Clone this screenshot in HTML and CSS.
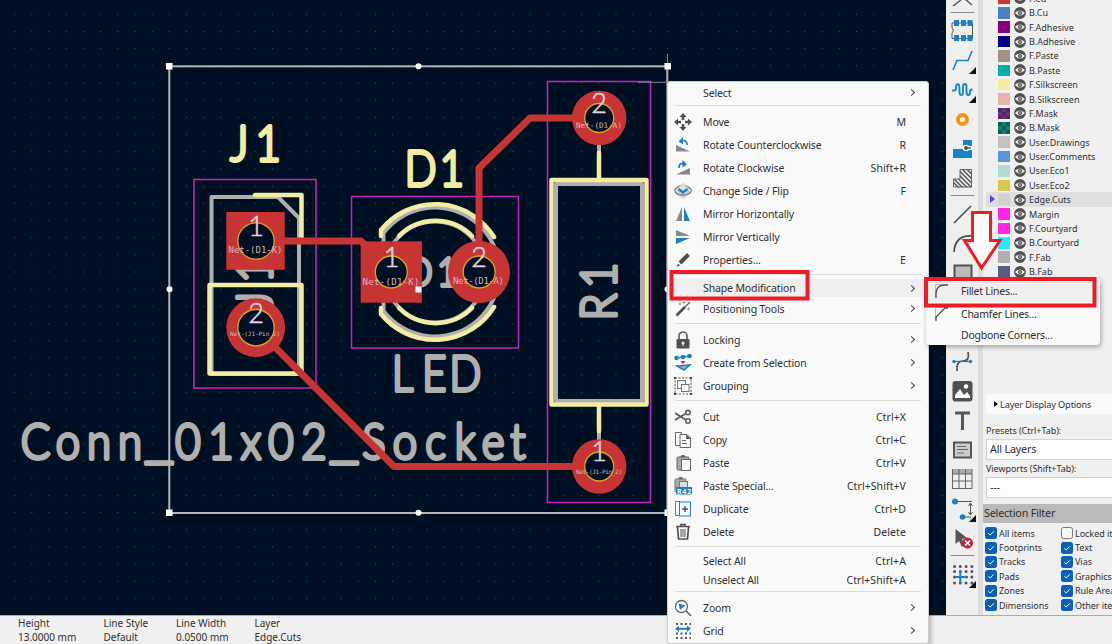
FILE: index.html
```html
<!DOCTYPE html>
<html lang="en">
<head>
<meta charset="utf-8">
<title>PCB Editor</title>
<link rel="stylesheet" href="styles.css">
</head>
<body>
<div class="app">
  <div class="workspace">
    <svg class="canvas" width="946" height="615" viewBox="0 0 946 615">
      <defs>
        <pattern id="dots" x="14.2" y="13.8" width="17.18" height="17.18" patternUnits="userSpaceOnUse"><rect width="1" height="1" fill="#46525c"/></pattern>
      </defs>
      <rect width="946" height="615" fill="#001023"/>
      <rect width="946" height="615" fill="url(#dots)"/>
      <g class="fab">
        <path d="M211.5 374V197H278L299 218V374Z"/>
        <path d="M383.5 311V233A64.500 64.500 0 1 1 383.5 311"/>
        <circle cx="435" cy="272" r="50.500"/>
        <rect x="556" y="184" width="86" height="217"/>
        <path d="M599 145V155M599 430V441"/>
      </g>
      <g class="glyph grey">
        <text class="big" transform="scale(.9 1)" y="459.500 459.500 459.500 459.500 452.500 459.500 459.500 459.500 459.500 459.500 452.500 459.500 459.500 459.500 459.500 459.500 459.500" x="39.4 75.500 110 144.500 176.700 208.900 245.500 279 312.200 348.900 382.200 415.500 450 484 516.700 547.800 575.500">Conn<tspan class="bar">_</tspan>01x02<tspan class="bar">_</tspan>Socket</text>
        <text class="big" transform="scale(.86 1)" x="468 505 541" y="391.5">LED</text>
        <text class="mid" transform="scale(.9 1)" x="466 497" y="286">D1</text>
        <text class="big" transform="translate(615.5 0) rotate(-90) scale(.9 1)" x="-341 -306" y="0">R1</text>
        <text class="big" transform="translate(271.5 0) rotate(-90) scale(.9 1)" x="-334.500 -300" y="0">J1</text>
      </g>
      <g class="silk">
        <path d="M255 195H301.5V240M209.5 285H301.5V373.5H209.5Z"/>
        <path d="M381 236V230A69.400 69.400 0 0 1 494 237M381 308V314A69.400 69.400 0 0 0 494 307"/>
        <path d="M399 236A51.5 51.5 0 0 1 472 236M399 308A51.5 51.5 0 0 0 472 308"/>
        <rect x="551.5" y="180" width="95" height="224.5"/>
        <path d="M599 153V180M599 405V431"/>
      </g>
      <g class="glyph yellow">
        <text class="big" transform="scale(.9 1)" x="266 298" y="161.5">J1</text>
        <text class="big" transform="scale(.86 1)" x="489 525.500" y="186.5">D1</text>
      </g>
      <g class="court">
        <rect x="194" y="179.5" width="122" height="208.5"/>
        <rect x="351.5" y="196.5" width="167" height="151.5"/>
        <rect x="547.5" y="81.5" width="103" height="421"/>
      </g>
      <g class="track">
        <path d="M256 241H361L391 272M479 272V168L530 118H599M256 328L394 466.5H599"/>
      </g>
      <g fill="#c83434">
        <rect x="226.3" y="212" width="58.4" height="57.8"/><circle cx="255.7" cy="327.7" r="29.4"/>
        <rect x="360.7" y="241.4" width="61.2" height="61.3"/><circle cx="479" cy="272" r="31"/>
        <circle cx="599.2" cy="118" r="27.2"/><circle cx="599.2" cy="466.5" r="27.2"/>
      </g>
      <g class="hole">
        <circle cx="256" cy="241" r="18.2"/><circle cx="256" cy="327.7" r="18.2"/>
        <circle cx="391.3" cy="272" r="16"/><circle cx="479.2" cy="272" r="16"/>
        <circle cx="599.2" cy="118" r="14.5"/><circle cx="599.2" cy="466.5" r="14.5"/>
      </g>
      <g class="padno">
        <text x="256" y="236">1</text><text x="256" y="323">2</text>
        <text x="391.5" y="266.5">1</text><text x="479" y="266.5">2</text>
        <text x="599" y="112.5">2</text><text x="599" y="461">1</text>
      </g>
      <g class="net">
        <text x="228.5" y="253" textLength="54">Net-(D1-K)</text>
        <text x="362.5" y="285" textLength="57">Net-(D1-K)</text>
        <text x="453" y="284" textLength="51">Net-(D1-A)</text>
        <text class="net-s" x="576" y="128" textLength="46">Net-(D1-A)</text>
        <text class="net-xs" x="230" y="336" textLength="50">Net-(J1-Pin_2)</text>
        <text class="net-xs" x="576" y="474" textLength="46">Net-(J1-Pin_2)</text>
      </g>
      <g class="edge">
        <rect x="169.3" y="66.3" width="498" height="446.7"/>
        <path class="cursor" d="M667.5 54V66M638 82.3H668"/>
      </g>
      <g fill="#fff">
        <path d="M166 63h6.5v6.500h-6.500zM664.500 63h6.500v6.500h-6.500zM166 509.500h6.500v6.500h-6.500zM664.500 509.500h6.500v6.500h-6.500zM415.500 286.500h6v6h-6z"/>
        <circle cx="418.500" cy="66.300" r="3"/><circle cx="418.500" cy="512.700" r="3"/><circle cx="169.500" cy="289.300" r="3"/><circle cx="667.500" cy="289.300" r="3"/>
      </g>
    </svg>

    <svg class="toolbar" width="32" height="615" viewBox="946 0 32 615">
      <g fill="none" stroke="#575757" stroke-width="1.500">
        <path d="M953 6L961 0M972 5L965-1"/>
        <path d="M950.500 12.500H974M950.500 195.500H974M950.500 555.500H974" stroke="#8c8c8c" stroke-width="1"/>
        <path d="M952 23V28q3 2 0 5V38.500H972.500V23Z" stroke-width="1"/>
      </g>
      <path fill="#1a81c4" d="M954 20h5v6h-5zM961 20h5v6h-5zM967.500 20h5v6h-5zM954 35h5v6h-5zM961 35h5v6h-5zM967.500 35h5v6h-5z"/>
      <path fill="none" stroke="#1a81c4" stroke-width="1.600" d="M953 70L957 60.500H968L972 51"/>
      <path fill="none" stroke="#1a81c4" stroke-width="1.900" d="M952 90.500h2.500q1.500 0 1.500-2.500c0-5 3.500-5 3.500 0v4c0 4 3.500 4 3.500 0v-5c0-4 3.500-4 3.500 0v5c0 4 3.500 4 3.500 0q0-2.500 2.500-2.500"/>
      <path fill="#111" d="M976 67V74H969ZM976 96V103H969ZM976 515V522H969ZM976 581V588H969Z"/>
      <circle cx="962.500" cy="119.500" r="4.500" fill="#fff" stroke="#f6930a" stroke-width="4"/>
      <path fill="#1a81c4" d="M963 140H972V158H953V149H963Z"/><path d="M966 148H972" stroke="#fff" stroke-width="4"/><circle cx="966" cy="148" r="3.300" fill="#fff"/><path d="M966 148H971" stroke="#555" stroke-width="1.500"/><circle cx="966" cy="148" r="2" fill="#555"/>
      <clipPath id="zone"><path d="M960 169H972V187.500H953V179H960Z"/></clipPath>
      <g clip-path="url(#zone)"><path stroke="#555" stroke-width="1.500" d="M944 169l20 20M948.500 169l20 20M953 169l20 20M957.500 169l20 20M962 169l20 20M966.500 169l20 20M940 169l20 20"/></g>
      <path fill="none" stroke="#666" d="M960 169.500H971.500V187H953.500V179H960Z"/>
      <g fill="none" stroke="#505050" stroke-width="1.700"><path d="M954 223L971 206M954 252Q955 235 972 236"/><rect x="954.500" y="265.500" width="17" height="17" fill="#bbb" stroke-width="2"/>
      <path d="M957 371Q956 361 963 361T968 352"/></g>
      <path d="M953 361.500H971" stroke="#1a81c4" stroke-width="1.200"/><circle cx="954" cy="361.500" r="1.700" fill="#1a81c4"/><circle cx="970.500" cy="361.500" r="1.700" fill="#1a81c4"/>
      <rect x="952.500" y="381" width="20" height="20.500" rx="3" fill="#505050"/><circle cx="966" cy="386.500" r="2.300" fill="#fff"/><path d="M955 398V395L960 389L964 395L967 392L970 396V398Z" fill="#fff"/>
      <path d="M955 413H970M962.500 413V430" stroke="#575757" stroke-width="3"/>
      <rect x="954" y="442.500" width="17" height="15" fill="#ccc" stroke="#555" stroke-width="2"/><path d="M957 446.500H966M957 449.500H968M957 453H964" stroke="#666"/>
      <rect x="952" y="469" width="20" height="5" fill="#aaa"/><path d="M952.500 469V489M959 469V489M965.500 469V489M972 469V489M952 474H972M952 481H972M952 488.500H972" stroke="#666"/>
      <g fill="#1a81c4"><circle cx="955" cy="501.500" r="3"/><circle cx="962.500" cy="517" r="2.800"/></g>
      <path d="M957 501.500H972M963 517H971M970.500 503V515M968.500 506L970.500 503L972.500 506M968.500 512L970.500 515L972.500 512" fill="none" stroke="#555"/>
      <path d="M955.500 529V544L959 541L962 547L965 545L962 539L967 538Z" fill="#555"/><circle cx="967.500" cy="543" r="5.500" fill="#c51f45"/><path d="M965 540.500L970 545.500M970 540.500L965 545.500" stroke="#fff" stroke-width="1.700"/>
      <path d="M954.500 566.500H973M954.500 571.500H973M954.500 577H973M954.500 583H973" stroke="#555" stroke-width="3" stroke-linecap="round" stroke-dasharray="0 5.800"/>
      <path d="M955.500 577H968M960.300 571V583" stroke="#1a81c4" stroke-width="2"/>
    </svg>

    <div class="panel">
      <svg width="0" height="0" class="defs"><defs><symbol id="eye" viewBox="0 0 12 12"><circle cx="6" cy="6" r="5.900" fill="#505050"/><path d="M1 6Q6 .8 11 6Q6 11.200 1 6Z" fill="#ececec"/><circle cx="6" cy="6" r="2.100" fill="#505050"/><circle cx="6" cy="6" r=".8" fill="#ddd"/></symbol>
      <symbol id="chk" viewBox="0 0 12 12"><rect width="12" height="12" rx="2.500" fill="#0860b8"/><path d="M3.300 6.200L5.200 8L8.800 4.300" fill="none" stroke="#fff" stroke-width="1"/></symbol></defs></svg>
      <div class="layers">
        <div class="layer"><i class="c-fcu"></i><svg><use href="#eye"/></svg><span>F.Cu</span></div>
        <div class="layer"><i class="c-bcu"></i><svg><use href="#eye"/></svg><span>B.Cu</span></div>
        <div class="layer"><i class="c-fad"></i><svg><use href="#eye"/></svg><span>F.Adhesive</span></div>
        <div class="layer"><i class="c-bad"></i><svg><use href="#eye"/></svg><span>B.Adhesive</span></div>
        <div class="layer"><i class="c-fpa"></i><svg><use href="#eye"/></svg><span>F.Paste</span></div>
        <div class="layer"><i class="c-bpa"></i><svg><use href="#eye"/></svg><span>B.Paste</span></div>
        <div class="layer"><i class="c-fsi"></i><svg><use href="#eye"/></svg><span>F.Silkscreen</span></div>
        <div class="layer"><i class="c-bsi"></i><svg><use href="#eye"/></svg><span>B.Silkscreen</span></div>
        <div class="layer"><i class="c-fma"></i><svg><use href="#eye"/></svg><span>F.Mask</span></div>
        <div class="layer"><i class="c-bma"></i><svg><use href="#eye"/></svg><span>B.Mask</span></div>
        <div class="layer"><i class="c-udr"></i><svg><use href="#eye"/></svg><span>User.Drawings</span></div>
        <div class="layer"><i class="c-uco"></i><svg><use href="#eye"/></svg><span>User.Comments</span></div>
        <div class="layer"><i class="c-ue1"></i><svg><use href="#eye"/></svg><span>User.Eco1</span></div>
        <div class="layer"><i class="c-ue2"></i><svg><use href="#eye"/></svg><span>User.Eco2</span></div>
        <div class="layer active"><i class="c-edg"></i><svg><use href="#eye"/></svg><span>Edge.Cuts</span></div>
        <div class="layer"><i class="c-mar"></i><svg><use href="#eye"/></svg><span>Margin</span></div>
        <div class="layer"><i class="c-mar"></i><svg><use href="#eye"/></svg><span>F.Courtyard</span></div>
        <div class="layer"><i class="c-bco"></i><svg><use href="#eye"/></svg><span>B.Courtyard</span></div>
        <div class="layer"><i class="c-ffa"></i><svg><use href="#eye"/></svg><span>F.Fab</span></div>
        <div class="layer"><i class="c-bfa"></i><svg><use href="#eye"/></svg><span>B.Fab</span></div>
      </div>
      <div class="display-options"><b></b><span>Layer Display Options</span></div>
      <div class="label first">Presets (Ctrl+Tab):</div>
      <div class="combo">All Layers</div>
      <div class="label second">Viewports (Shift+Tab):</div>
      <div class="combo">---</div>
      <div class="filter-head">Selection Filter</div>
      <div class="filters">
        <label><svg><use href="#chk"/></svg>All items</label><label><em></em>Locked items</label>
        <label><svg><use href="#chk"/></svg>Footprints</label><label><svg><use href="#chk"/></svg>Text</label>
        <label><svg><use href="#chk"/></svg>Tracks</label><label><svg><use href="#chk"/></svg>Vias</label>
        <label><svg><use href="#chk"/></svg>Pads</label><label><svg><use href="#chk"/></svg>Graphics</label>
        <label><svg><use href="#chk"/></svg>Zones</label><label><svg><use href="#chk"/></svg>Rule Areas</label>
        <label><svg><use href="#chk"/></svg>Dimensions</label><label><svg><use href="#chk"/></svg>Other items</label>
      </div>
    </div>
  </div>
  <div class="status">
    <div>Height<br>13.0000 mm</div><div>Line Style<br>Default</div><div>Line Width<br>0.0500 mm</div><div>Layer<br>Edge.Cuts</div>
  </div>
</div>

<div class="menu">
  <div class="item short"><span>Select</span><u></u></div>
  <hr>
  <div class="item"><svg viewBox="0 0 18 18"><path fill="#505050" d="M9 0l3.500 4H10.300v3H7.700V4H5.500zM9 18l3.500-4H10.300v-3H7.700v3H5.500zM0 9l4-3.500v2.200h3v2.600H4v2.200zM18 9l-4-3.500v2.200h-3v2.600h3v2.200z"/></svg><span>Move</span><kbd>M</kbd></div>
  <div class="item"><svg viewBox="0 0 18 18"><path fill="#888" d="M2 9L16 15.500H2Z"/><path d="M7 5Q13 3 13 9" fill="none" stroke="#1a81c4" stroke-width="1.700"/><path fill="#1a81c4" d="M4.500 5.500L9 1V8.500Z"/></svg><span>Rotate Counterclockwise</span><kbd>R</kbd></div>
  <div class="item"><svg viewBox="0 0 18 18"><path fill="#888" d="M16 9L2 15.500H16Z"/><path d="M10 5Q5 3 5 9" fill="none" stroke="#1a81c4" stroke-width="1.700"/><path fill="#1a81c4" d="M13 5.500L8.500 1V8.500Z"/></svg><span>Rotate Clockwise</span><kbd>Shift+R</kbd></div>
  <div class="item"><svg viewBox="0 0 18 18"><path fill="#d2d2d2" d="M9 1L16 6V12L9 17L2 12V6Z"/><ellipse cx="9" cy="8.500" rx="8.300" ry="4.700" fill="none" stroke="#777" stroke-width="1.200"/><path fill="#ddd" d="M9 1L14 6L9 10L4 6Z"/><path d="M4.500 7L9 10.500L13.500 7" fill="none" stroke="#1a81c4" stroke-width="2.500"/></svg><span>Change Side / Flip</span><kbd>F</kbd></div>
  <div class="item"><svg viewBox="0 0 18 18"><path fill="#888" d="M8 2V16H2Z"/><path fill="#1a81c4" d="M10 2V16H16Z"/></svg><span>Mirror Horizontally</span></div>
  <div class="item"><svg viewBox="0 0 18 18"><path fill="#888" d="M2 2L16 8H2Z"/><path fill="#1a81c4" d="M2 10H16L2 16Z"/></svg><span>Mirror Vertically</span></div>
  <div class="item"><svg viewBox="0 0 18 18"><path d="M6 12L14.500 3.500" stroke="#505050" stroke-width="4"/><path fill="#505050" d="M4 12.500l2 2l-3.500 1.500z"/></svg><span>Properties...</span><kbd>E</kbd></div>
  <hr>
  <div class="item short hover"><span>Shape Modification</span><u></u></div>
  <div class="item"><svg viewBox="0 0 18 18"><path d="M2.500 15.500L11 7" stroke="#505050" stroke-width="2.600"/><path d="M11 7L16 2" stroke="#666" stroke-width="1.500"/><path d="M6 2.500v3M4.500 4h3M10 1v3M8.500 2.500h3M14.500 7.500v3M13 9h3" stroke="#888" stroke-width=".8"/></svg><span>Positioning Tools</span><u></u></div>
  <hr>
  <div class="item"><svg viewBox="0 0 18 18"><rect x="2.500" y="8" width="13" height="9.500" rx="1" fill="#505050"/><path d="M5 8V5a4 4 0 0 1 8 0V8" fill="none" stroke="#606060" stroke-width="1.700"/><path d="M9 10.500v4.500M7.500 12h3" stroke="#eee" stroke-width="1.300"/></svg><span>Locking</span><u></u></div>
  <div class="item"><svg viewBox="0 0 18 18"><path d="M2 4L9 3L16 2" stroke="#1a81c4" stroke-width="1.500"/><g fill="#1a81c4"><circle cx="2.500" cy="4" r="2.300"/><circle cx="9" cy="3" r="2.300"/><circle cx="15.500" cy="2" r="2.300"/></g><path fill="#c51f45" d="M6.500 7h5L9 10z"/><path d="M3 12L16 11L10 16Z" fill="#aaa" stroke="#1a81c4" stroke-width="1.500"/></svg><span>Create from Selection</span><u></u></div>
  <div class="item"><svg viewBox="0 0 18 18"><rect x="1" y="1" width="16" height="16" fill="none" stroke="#555" stroke-dasharray="2 1.500"/><g fill="#f8f8f8" stroke="#777"><rect x="3.500" y="3.500" width="8" height="8"/><rect x="7.500" y="7.500" width="7.500" height="7"/></g><path fill="#444" d="M0 0h2v2H0zM16 0h2v2h-2zM0 16h2v2H0zM16 16h2v2h-2z"/></svg><span>Grouping</span><u></u></div>
  <hr>
  <div class="item"><svg viewBox="0 0 18 18"><g fill="none" stroke="#555" stroke-width="1.500"><circle cx="14" cy="4.500" r="2.300"/><circle cx="14" cy="13" r="2.300"/><path d="M1 5L12 12M1 12L12 5.500"/></g></svg><span>Cut</span><kbd>Ctrl+X</kbd></div>
  <div class="item"><svg viewBox="0 0 18 18"><g fill="#f8f8f8" stroke="#666"><path d="M6 14.500H1.500V1.500H7.500V4"/><path d="M6 3.500H13L16.500 7V16.500H6Z"/><path d="M12.500 3.500V7.500H16.500M8 9.500H12M8 12.500H13"/></g><path d="M12.500 3.500L16.500 7.500H12.500z" fill="#555"/></svg><span>Copy</span><kbd>Ctrl+C</kbd></div>
  <div class="item"><svg viewBox="0 0 18 18"><rect x="3" y="3" width="12" height="13" rx="1" fill="#aaa" stroke="#666"/><path d="M6 3L7.500 1H10L12 3Z" fill="#666"/><rect x="7.500" y="5.500" width="9" height="11" fill="#fafafa" stroke="#666"/></svg><span>Paste</span><kbd>Ctrl+V</kbd></div>
  <div class="item"><svg viewBox="0 0 18 18"><rect x="1" y="2" width="11" height="13" rx="1" fill="#aaa" stroke="#777"/><path d="M4 2L5.500 0H8L9 2Z" fill="#666"/><rect x="5.500" y="4.500" width="8" height="8" fill="#ddd" stroke="#777"/><rect x="2" y="10" width="16" height="7.500" fill="#1a81c4"/><text x="3" y="16.500" fill="#fff" font-size="7" font-weight="700" textLength="14">R42</text></svg><span>Paste Special...</span><kbd>Ctrl+Shift+V</kbd></div>
  <div class="item"><svg viewBox="0 0 18 18"><path d="M5 15.500H1.500V1.500H6" fill="none" stroke="#777"/><rect x="5.500" y="2" width="11" height="14" fill="#fafafa" stroke="#1a81c4"/><path d="M8 9h6M11 6v6" stroke="#555" stroke-width="1.500"/></svg><span>Duplicate</span><kbd>Ctrl+D</kbd></div>
  <div class="item"><svg viewBox="0 0 18 18"><path d="M3.500 4L4.500 16H13.500L14.500 4M2 3.500H16M7 3V1.500H11V3" fill="none" stroke="#505050" stroke-width="1.700"/><path d="M7 6V14M9 6V14M11 6V14" stroke="#505050"/></svg><span>Delete</span><kbd>Delete</kbd></div>
  <hr>
  <div class="item short"><span>Select All</span><kbd>Ctrl+A</kbd></div>
  <div class="item short"><span>Unselect All</span><kbd>Ctrl+Shift+A</kbd></div>
  <hr class="tight">
  <div class="item"><svg viewBox="0 0 18 18"><circle cx="7.500" cy="7.500" r="6" fill="#fff" stroke="#666" stroke-width="1.300"/><path d="M12 12L17 17" stroke="#666" stroke-width="1.700"/><path d="M4.500 4.500L11.500 6.500L6 11Z" fill="#1a81c4"/></svg><span>Zoom</span><u></u></div>
  <div class="item"><svg viewBox="0 0 18 18"><path d="M2 2H17M2 11.500H17M2 16H17" stroke="#555" stroke-width="2" stroke-dasharray="2 2.500"/><path d="M3 6.800H15" stroke="#1a81c4" stroke-width="2"/><path fill="#1a81c4" d="M5 3.500v6.500L1 6.800zM13 3.500v6.500l4-3.200z"/></svg><span>Grid</span><u></u></div>
</div>

<div class="submenu">
  <div class="sub hover"><svg viewBox="0 0 18 18"><path d="M2.500 15V2.500H15" fill="none" stroke="#bbb"/><path d="M3 16V12Q3 3 12 3H15" fill="none" stroke="#555" stroke-width="1.400"/></svg><span>Fillet Lines...</span></div>
  <div class="sub"><svg viewBox="0 0 18 18"><path d="M2.500 15V2.500H15" fill="none" stroke="#bbb"/><path d="M3 16V12L12 3H15" fill="none" stroke="#555" stroke-width="1.400"/></svg><span>Chamfer Lines...</span></div>
  <div class="sub short"><span>Dogbone Corners...</span></div>
</div>
<svg class="marks" width="1112" height="644" viewBox="0 0 1112 644"><g fill="none" stroke="#ee1c25" stroke-width="4"><rect x="671.500" y="272" width="136" height="26.500"/><rect x="926" y="279" width="168.500" height="26.500"/></g><path d="M972.500 212.500H990.500V240.500H1000L981.500 268L964.500 240.500H972.500Z" fill="#fafafa" stroke="#ee1c25" stroke-width="3"/></svg>
</body>
</html>
```
FILE: styles.css
```css
* { box-sizing: border-box; }
body { margin: 0; width: 1112px; height: 644px; overflow: hidden; background: #f0f0f0; color: #303030; font-family: "Noto Sans", "Open Sans", sans-serif; }
.app { display: flex; flex-direction: column; height: 644px; }
.workspace { display: flex; height: 615px; overflow: hidden; }
.canvas { flex: none; display: block; }
.toolbar { flex: none; display: block; background: #efefef; }

/* Board drawing */
.fab { fill: none; stroke: #afafaf; stroke-width: 4; stroke-linejoin: round; }
.silk { fill: none; stroke: #f2eda1; stroke-width: 4.5; stroke-linecap: round; stroke-linejoin: round; }
.court { fill: none; stroke: #c423c0; stroke-width: 1.5; }
.track { fill: none; stroke: #c83434; stroke-width: 7; stroke-linejoin: round; }
.hole { fill: #001023; stroke: #d9a821; stroke-width: 1.3; }
.edge { fill: none; stroke: #b0b5ba; stroke-width: 2; }
.cursor { stroke: #7d8790; stroke-width: 1; }
.glyph { font-family: Lato, sans-serif; font-weight: 300; text-anchor: middle; stroke-width: 3.8; stroke-linejoin: round; }
.grey { fill: #afafaf; stroke: #afafaf; }
.yellow { fill: #f2eda1; stroke: #f2eda1; }
.big { font-size: 48.5px; }
.bar { font-family: "DejaVu Sans Mono", monospace; font-size: 50px; }
.mid { font-size: 38.5px; }
.padno { font: 300 27px Lato, sans-serif; text-anchor: middle; fill: #e3d2da; stroke: #e3d2da; stroke-width: .6; }
.net { font: 9px "DejaVu Sans Mono", monospace; fill: #d6b3ba; }
.net-s { font-size: 7.6px; }
.net-xs { font-size: 6px; }

/* Appearance panel */
.panel { flex: none; width: 134px; height: 615px; border-left: 5px solid #dedede; overflow: hidden; font-size: 9px; display: flex; flex-direction: column; }
.defs { position: absolute; }
.layers { height: 394px; flex: none; margin-top: -8.8px; margin-left: 3px; }
.layer { height: 14.38px; display: flex; align-items: center; padding-left: 12px; white-space: nowrap; position: relative; }
.layer i { width: 12px; height: 11.5px; margin-right: 4px; }
.layer svg { width: 12px; height: 12px; margin-right: 3px; }
.active { background: #dfdfdf; }
.active::before { content: ""; position: absolute; left: 4px; top: 3px; border: 4px solid transparent; border-left: 5px solid #4848f0; border-right: 0; }
.c-fcu { background: #c83434; } .c-bcu { background: #4d7fc4; }
.c-fad { background: #840084; } .c-bad { background: #000084; }
.c-fpa { background: #a39088; } .c-bpa { background: #00b0ae; }
.c-fsi { background: #f2eda1; } .c-bsi { background: #e8b2a7; }
.c-fma { background: repeating-conic-gradient(#6b3476 0 25%, #4f2768 0 50%) 0 0/8px 8px; }
.c-bma { background: repeating-conic-gradient(#137b70 0 25%, #036058 0 50%) 0 0/8px 8px; }
.c-udr { background: #c2c2c2; } .c-uco { background: #5994dc; }
.c-ue1 { background: #b4dbd2; } .c-ue2 { background: #d8c852; }
.c-edg { background: #d0d2cd; } .c-mar { background: #ff26e2; }
.c-bco { background: #26e9ff; } .c-ffa { background: #afafaf; } .c-bfa { background: #585d84; }
.display-options { flex: none; margin: 8.8px 0 0 3px; height: 20px; background: #fafafa; display: flex; align-items: center; padding-left: 8px; letter-spacing: -.12px; font-size: 9.2px; white-space: nowrap; }
.display-options b { border: 3.5px solid transparent; border-left: 4px solid #111; border-right: 0; margin-right: 2px; }
.label { flex: none; height: 17px; line-height: 17px; padding-left: 3px; white-space: nowrap; letter-spacing: -.05px; }
.first { margin-top: 8px; }
.combo { flex: none; height: 21px; line-height: 18px; margin-left: 3px; padding-left: 3px; background: #fdfdfd; border: 1px solid #d2d2d2; border-right: 0; font-size: 10.8px; letter-spacing: -.2px; }
.second { line-height: 17px; }
.filter-head { flex: none; margin-top: 6px; margin-left: -1px; height: 19px; line-height: 18px; background: #b9b9b9; padding-left: 2px; font-size: 10.8px; letter-spacing: -.2px; }
.filters { display: grid; grid-template-columns: 76px 76px; grid-auto-rows: 14.4px; margin: 3px 0 0 2px; letter-spacing: -.04px; }
.filters label { display: flex; align-items: center; white-space: nowrap; }
.filters svg, .filters em { flex: none; width: 12px; height: 12px; margin-right: 2px; }
.filters em { border: 1px solid #777; border-radius: 2.5px; background: #f8f8f8; }

/* Status strip */
.status { height: 29px; border-top: 1px solid #aaa; background: #f0f0f0; padding: 0 0 0 18px; display: grid; grid-template-columns: 85.5px 72.5px 78.5px 100px; font-size: 10px; line-height: 14px; white-space: nowrap; }

/* Context menu */
.menu { position: absolute; left: 667px; top: 81px; width: 262px; height: 563px; background: #f9f9f9; border: 1px solid #d0d0d0; border-radius: 3px; padding: 1px 0 0; box-shadow: 2px 3px 5px #0004; font-size: 10.5px; }
.item { height: 23px; display: flex; align-items: center; padding: 0 22px 0 35px; position: relative; white-space: nowrap; letter-spacing: -.13px; }
.item svg { width: 18px; height: 18px; margin-left: -29px; margin-right: 11px; }
.item kbd { font: inherit; margin-left: auto; letter-spacing: .08px; }
.item u { width: 5px; height: 5px; border: solid #444; border-width: 1.5px 1.5px 0 0; transform: rotate(45deg); margin-left: auto; margin-right: -8px; }
.short { height: 19px; }
.hover { background: #efefef; }
.menu .hover { height: 18px; }
.menu hr { height: 1px; border: 0; background: #dedede; margin: 3px 7px 4px; }
.menu hr.tight { margin: 2px 7px 4px; }
.submenu { position: absolute; left: 926px; top: 278px; width: 174px; height: 67px; background: #f9f9f9; border-radius: 4px; box-shadow: 1px 2px 5px #0005; font-size: 10.5px; padding-top: 1px; }
.sub { height: 23px; display: flex; align-items: center; padding-left: 35px; white-space: nowrap; letter-spacing: -.25px; }
.sub svg { width: 18px; height: 18px; margin-left: -28px; margin-right: 10px; }
.sub.short { height: 19px; }
.marks { position: absolute; left: 0; top: 0; pointer-events: none; }
```
